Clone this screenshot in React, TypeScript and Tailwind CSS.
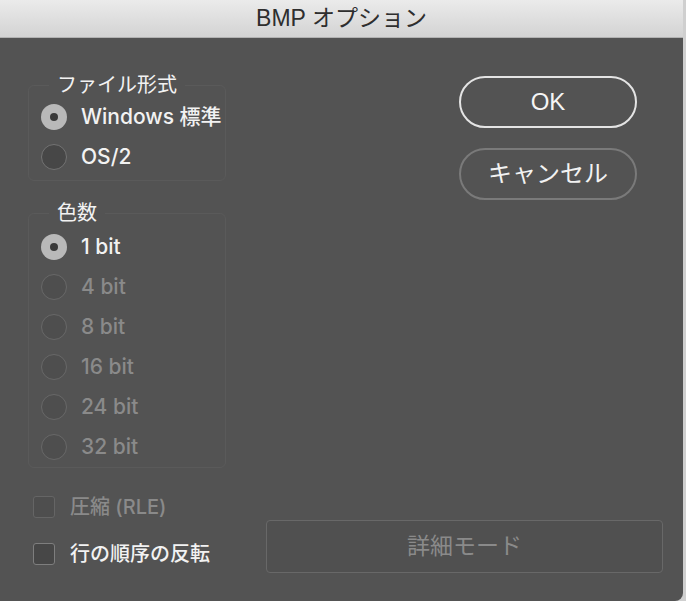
const font = { fontFamily: '"Liberation Sans", "Noto Sans CJK JP", sans-serif' }
const medium = { fontFamily: 'Inter, "Noto Sans CJK JP", sans-serif' }

const Radio = ({ label, checked, disabled }: { label: string; checked?: boolean; disabled?: boolean }) => {
  return (
    <div className="flex h-10 items-center gap-[14px]">
      {checked ? (
        <div className="flex h-[26px] w-[26px] items-center justify-center rounded-full bg-[#b9b9b9]">
          <div className="h-2 w-2 rounded-full bg-[#3a3a3a]" />
        </div>
      ) : (
        <div
          className={
            disabled
              ? "h-[26px] w-[26px] rounded-full border-[1.5px] border-[#686868] bg-[#4e4e4e]"
              : "h-[26px] w-[26px] rounded-full border-[1.5px] border-[#737373] bg-[#474747]"
          }
        />
      )}
      <span
        className={disabled ? "text-[21px] font-medium text-[#8a8a8a]" : "text-[21px] font-medium text-[#f2f2f2]"}
        style={medium}
      >
        {label}
      </span>
    </div>
  )
}

const Check = ({ label, disabled }: { label: string; disabled?: boolean }) => {
  return (
    <div className="flex h-[30px] items-center gap-[15px]">
      <div
        className={
          disabled
            ? "h-[22px] w-[22px] rounded-[3px] border-[1.5px] border-[#656565] bg-[#4e4e4e]"
            : "h-[22px] w-[22px] rounded-[3px] border-[1.5px] border-[#7e7e7e] bg-[#474747]"
        }
      />
      <span
        className={disabled ? "text-[20px] font-medium text-[#8a8a8a]" : "text-[20px] font-medium text-[#f2f2f2]"}
        style={medium}
      >
        {label}
      </span>
    </div>
  )
}

export default function App() {
  return (
    <div className="flex h-[601px] w-[686px] bg-[#cfcfcf]" style={font}>
      <div className="flex h-full w-[683px] flex-col overflow-hidden rounded-br-lg bg-[#535353]">
        {/* title bar */}
        <div className="flex h-[38px] shrink-0 items-center justify-center border-b border-[#b2b2b2] bg-gradient-to-b from-[#ebebeb] to-[#d3d3d3]">
          <span className="text-[23px] text-[#2e2e2e]">BMP オプション</span>
        </div>

        <div className="flex flex-1 justify-between pl-7 pr-[46px] pt-[35px]">
          <div className="flex w-[198px] flex-col">
            <fieldset className="rounded-md border border-[#5a5a5a] pb-[3px] pl-3">
              <legend className="ml-[8px] px-2 text-[20px] leading-6 text-[#f2f2f2]">ファイル形式</legend>
              <Radio label="Windows 標準" checked />
              <Radio label="OS/2" />
            </fieldset>
            <fieldset className="mt-5 rounded-md border border-[#5a5a5a] pl-3 pt-0.5">
              <legend className="ml-[8px] px-2 text-[20px] leading-6 text-[#f2f2f2]">色数</legend>
              <Radio label="1 bit" checked />
              <Radio label="4 bit" disabled />
              <Radio label="8 bit" disabled />
              <Radio label="16 bit" disabled />
              <Radio label="24 bit" disabled />
              <Radio label="32 bit" disabled />
            </fieldset>
          </div>

          <div className="flex flex-col gap-5 pt-[3px]">
            <button className="h-[52px] w-[178px] rounded-full border-2 border-[#e4e4e4] text-[24px] text-[#f5f5f5]">
              OK
            </button>
            <button className="h-[52px] w-[178px] rounded-full border-2 border-[#7a7a7a] text-[24px] text-[#f2f2f2]">
              キャンセル
            </button>
          </div>
        </div>

        <div className="flex items-end justify-between pb-[28px] pl-[33px] pr-5">
          <div className="mb-[4px] flex flex-col gap-[17px]">
            <Check label="圧縮 (RLE)" disabled />
            <Check label="行の順序の反転" />
          </div>
          <button className="h-[53px] w-[397px] rounded border border-[#686868] bg-[#505050] text-[23px] text-[#8a8a8a]">
            詳細モード
          </button>
        </div>
      </div>
    </div>
  )
}
